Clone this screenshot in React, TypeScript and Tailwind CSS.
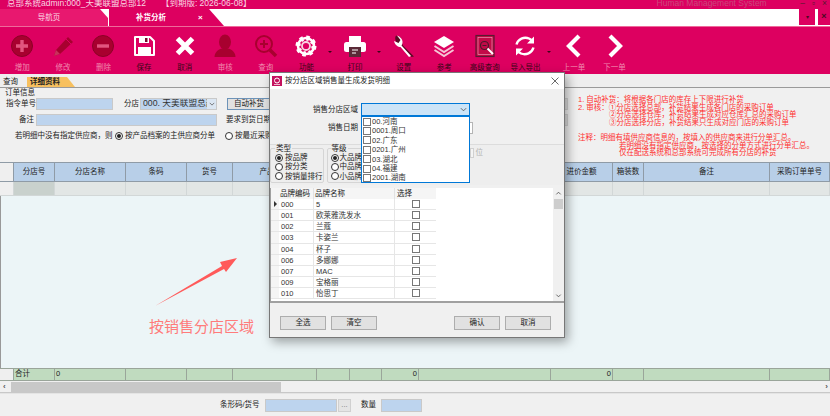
import { ReactNode } from 'react';

const FONT = "font-['Liberation_Sans','Noto_Sans_CJK_SC',sans-serif]";
const DARK = '#a8002f';

const icons: Record<string, ReactNode> = {
  add: (
    <svg viewBox="0 0 24 24" className="h-[24px] w-[24px]">
      <circle cx="12" cy="12" r="10.5" fill={DARK} stroke="#8c0026" />
      <path d="M12 6v12M6 12h12" stroke="#e2557f" strokeWidth="3.4" />
    </svg>
  ),
  edit: (
    <svg viewBox="0 0 24 24" className="h-[24px] w-[24px]">
      <path d="M3 22l2-6L17 3l5 5L9 20z" fill={DARK} />
      <path d="M3 22l2-6 4 4z" fill="#c9305c" />
      <path d="M15 5l5 5" stroke="#dd0060" strokeWidth="1" />
    </svg>
  ),
  remove: (
    <svg viewBox="0 0 24 24" className="h-[24px] w-[24px]">
      <circle cx="12" cy="12" r="10.5" fill={DARK} stroke="#8c0026" />
      <path d="M6 12h12" stroke="#e2557f" strokeWidth="3.4" />
    </svg>
  ),
  save: (
    <svg viewBox="0 0 24 24" className="h-[24px] w-[24px]">
      <path d="M3 3h15l4 4v14H3z" fill="#dd0060" stroke="#fff" strokeWidth="2" strokeLinejoin="round" />
      <path d="M7 3h10v6H7z" fill="#fff" />
      <path d="M13 4h2.500v4H13z" fill="#7a0a30" />
      <path d="M6 13h13v8H6z" fill="#fff" />
    </svg>
  ),
  cancel: (
    <svg viewBox="0 0 24 24" className="h-[24px] w-[24px]">
      <path d="M4.500 4.500l15 15M19.500 4.500l-15 15" stroke="#fff" strokeWidth="5" />
    </svg>
  ),
  audit: (
    <svg viewBox="0 0 24 24" className="h-[24px] w-[24px]">
      <ellipse cx="12" cy="8" rx="6" ry="7.500" fill={DARK} />
      <path d="M1.500 23c0-5 4-7.500 7-8.500h7c3 1 7 3.500 7 8.500z" fill={DARK} />
    </svg>
  ),
  query: (
    <svg viewBox="0 0 24 24" className="h-[24px] w-[24px]">
      <circle cx="10" cy="10" r="8" fill="none" stroke={DARK} strokeWidth="2" />
      <path d="M10 6v8M6 10h8" stroke={DARK} strokeWidth="2" />
      <path d="M16 16l6 6" stroke={DARK} strokeWidth="3.500" />
    </svg>
  ),
  gear: (
    <svg viewBox="0 0 24 24" className="h-[24px] w-[24px]">
      <circle cx="12" cy="12" r="8" fill="none" stroke="#fff" strokeWidth="2.600" />
      <circle cx="12" cy="12" r="8" fill="none" stroke="#fff" strokeWidth="5" strokeDasharray="3.200 3.080" />
      <circle cx="12" cy="12" r="4" fill="none" stroke="#f7d4e0" strokeWidth="1.800" />
    </svg>
  ),
  print: (
    <svg viewBox="0 0 24 24" className="h-[24px] w-[24px]">
      <path d="M6 8V2h12v6z" fill="#fff" />
      <rect x="1" y="8" width="22" height="10" rx="2.500" fill="#fff" />
      <path d="M6 13h12v10H6z" fill="#5a2a38" />
      <path d="M9 16h6M9 19h4" stroke="#fff" strokeWidth="1" />
    </svg>
  ),
  wrench: (
    <svg viewBox="0 0 24 24" className="h-[24px] w-[24px]">
      <path d="M21 22.500L10 11.500C8.500 7.500 7 7 8 3.500L3 1.500C1 5 3 9.500 7 10.500L18.500 23z" fill="#5a0a24" transform="translate(1 0)" />
      <path d="M19 22L9.500 11.500C12 8 10 3 5 1.500L8.500 6 6.500 9 2 7C3 11 6 13 8.500 13L17 23z" fill="#fff" />
    </svg>
  ),
  layers: (
    <svg viewBox="0 0 24 24" className="h-[24px] w-[24px]">
      <path d="M12 2L22 8l-10 6L2 8z" fill="#fff" />
      <path d="M2.500 12L12 18l9.500-6M2.500 16L12 22l9.500-6" fill="none" stroke="#f5c5d5" strokeWidth="2" />
    </svg>
  ),
  advanced: (
    <svg viewBox="0 0 24 24" className="h-[24px] w-[24px]">
      <rect x="3" y="1.500" width="18" height="21" fill="#c20a48" stroke="#5a1a30" strokeWidth="1.200" />
      <rect x="5" y="3.500" width="14" height="17" fill="none" stroke="#f2a9c0" strokeWidth=".6" />
      <circle cx="11.500" cy="11.500" r="4" fill="none" stroke="#4a1a2a" strokeWidth="1.200" />
      <path d="M9.500 11.500h4" stroke="#4a1a2a" strokeWidth="1" />
      <path d="M14.500 14.500l5.500 5.500" stroke="#fff" strokeWidth="2" />
    </svg>
  ),
  refresh: (
    <svg viewBox="0 0 24 24" className="h-[24px] w-[24px]">
      <path d="M3.500 10.500C5 5 11 2.500 16 4.500l2.500 1.500" fill="none" stroke="#fff" strokeWidth="2.400" />
      <path d="M20.500 13.500C19 19 13 21.500 8 19.500L5.500 18" fill="none" stroke="#fff" strokeWidth="2.400" />
      <path d="M21 2.500v7h-7zM3 21.500v-7h7z" fill="#fff" />
    </svg>
  ),
  prev: (
    <svg viewBox="0 0 24 24" className="h-[24px] w-[24px]">
      <path d="M17 2L7 12l10 10" fill="none" stroke="#fff" strokeWidth="4.200" />
    </svg>
  ),
  next: (
    <svg viewBox="0 0 24 24" className="h-[24px] w-[24px]">
      <path d="M7 2l10 10L7 22" fill="none" stroke="#fff" strokeWidth="4.200" />
    </svg>
  ),
};

const tools = [
  { key: 'add', label: '增加', off: true },
  { key: 'edit', label: '修改', off: true },
  { key: 'remove', label: '删除', off: true },
  { key: 'save', label: '保存' },
  { key: 'cancel', label: '取消' },
  { key: 'audit', label: '审核', off: true },
  { key: 'query', label: '查询', off: true },
  { key: 'gear', label: '功能', menu: true },
  { key: 'print', label: '打印', menu: true },
  { key: 'wrench', label: '设置' },
  { key: 'layers', label: '参考' },
  { key: 'advanced', label: '高级查询' },
  { key: 'refresh', label: '导入导出', menu: true },
  { key: 'prev', label: '上一单', off: true },
  { key: 'next', label: '下一单', off: true },
];

const columns = [
  { w: 14, name: '' },
  { w: 41, name: '分店号' },
  { w: 71, name: '分店名称' },
  { w: 61, name: '条码' },
  { w: 46, name: '货号' },
  { w: 84, name: '产品名称' },
  { w: 33, name: '' },
  { w: 32, name: '' },
  { w: 37, name: '' },
  { w: 132, name: '进价' },
  { w: 62, name: '进价金额' },
  { w: 31, name: '箱装数' },
  { w: 126, name: '备注' },
  { w: 60, name: '采购订单单号' },
];

const regions = ['00.河南', '0001.周口', '02.广东', '0201.广州', '03.湖北', '04.福建', '2001.湖南'];

const brands = [
  ['000', '5'],
  ['001', '欧莱雅洗发水'],
  ['002', '兰蔻'],
  ['003', '卡姿兰'],
  ['004', '杯子'],
  ['006', '多娜娜'],
  ['007', 'MAC'],
  ['009', '宝格丽'],
  ['010', '怡思丁'],
];

function Radio({ on }: { on?: boolean }) {
  return (
    <span className="flex h-[8px] w-[8px] shrink-0 items-center justify-center rounded-full border border-[#333] bg-white">
      {on && <span className="h-[4px] w-[4px] rounded-full bg-[#222]" />}
    </span>
  );
}

function Check() {
  return <span className="block h-[8px] w-[8px] shrink-0 border border-[#777] bg-white" />;
}

function DialogButton({ label }: { label: string }) {
  return (
    <button className="h-[14px] w-[46px] border border-[#adadad] bg-[#e1e1e1] text-[7.5px] leading-none text-[#222]">
      {label}
    </button>
  );
}

function ReplenishDialog() {
  return (
    <div className="absolute left-[269px] top-[72px] h-[266px] w-[296px] border border-[#777] bg-[#f0f0f0] shadow-[3px_4px_10px_rgba(0,0,0,0.35)]">
      <div className="flex h-[16px] items-center bg-white pl-[2px] pr-[5px]">
        <svg viewBox="0 0 10 10" className="h-[10px] w-[10px]">
          <rect width="10" height="10" fill="#c4125e" />
          <circle cx="5" cy="4.500" r="2.500" fill="none" stroke="#fff" strokeWidth="1" />
          <path d="M2 8.500h6" stroke="#fff" strokeWidth=".7" />
        </svg>
        <span className="ml-[3px] text-[7.5px] text-[#222]">按分店区域销售量生成发货明细</span>
        <svg viewBox="0 0 8 8" className="ml-auto h-[8px] w-[8px]">
          <path d="M.5.5l7 7M7.500.5l-7 7" stroke="#444" strokeWidth=".8" />
        </svg>
      </div>

      <div className="mt-[14px] flex h-[13px] items-center">
        <span className="w-[88px] text-right text-[7.5px] text-[#222]">销售分店区域</span>
        <div className="ml-[3px] flex h-[13px] w-[109px] items-center justify-end border border-[#0078d7] bg-[#cce4f7] pr-[2px]">
          <svg viewBox="0 0 8 8" className="h-[7px] w-[7px]">
            <path d="M1 2.500l3 3 3-3" fill="none" stroke="#555" strokeWidth="1" />
          </svg>
        </div>
      </div>
      <div className="mt-[6px] flex h-[12px] items-center">
        <span className="w-[88px] text-right text-[7.5px] text-[#222]">销售日期</span>
        <div className="ml-[3px] h-[12px] w-[112px] border border-[#b5b5b5] bg-white" />
      </div>

      <div className="mt-[10px] flex h-[41px] border-t border-[#dcdcdc] bg-[#eeeeee] pt-[1px]">
        <fieldset className="h-[37px] w-[52px] rounded-[2px] border border-[#d5d5d5] pl-[4px] pt-[2px]">
          <legend className="px-[1px] text-[7.5px] leading-[5px] text-[#222]">类型</legend>
          {['按品牌', '按分类', '按销量排行'].map((t, i) => (
            <div key={t} className="flex h-[9.3px] items-center gap-[2px] text-[7.5px] whitespace-nowrap text-[#222]">
              <Radio on={i === 0} />
              {t}
            </div>
          ))}
        </fieldset>
        <fieldset className="ml-[3px] h-[37px] w-[60px] rounded-[2px] border border-[#d5d5d5] pl-[3px] pt-[2px]">
          <legend className="px-[1px] text-[7.5px] leading-[5px] text-[#222]">等级</legend>
          {['大品牌', '中品牌', '小品牌'].map((t, i) => (
            <div key={t} className="flex h-[9.3px] items-center gap-[1px] text-[7.5px] whitespace-nowrap text-[#222]">
              <Radio on={i === 0} />
              {t}
            </div>
          ))}
        </fieldset>
        <div className="ml-[83px] mt-[2px] h-[10px] w-[4px] border border-[#d0d0d0] bg-[#f4f4f4]" />
        <span className="ml-[2px] mt-[2px] text-[7.5px] leading-[10px] text-[#b0b0b0]">位</span>
      </div>

      <div className="mt-[3px] flex h-[115px] w-[294px] border-b-2 border-l border-[#a0a0a0] bg-white">
        <div className="w-[282px]">
          <div className="flex h-[11px] text-[7.5px] leading-[11px] text-[#222]">
            <div className="w-[8px] bg-[#f5f5f5]" />
            <div className="w-[35px] border-r border-[#e2e2e2] bg-[#f5f5f5] pl-[1px]">品牌编码</div>
            <div className="w-[81px] border-r border-[#e2e2e2] bg-[#f5f5f5] pl-[1px]">品牌名称</div>
            <div className="w-[41px] bg-[#f5f5f5] pl-[2px]">选择</div>
          </div>
          {brands.map(([code, name], i) => (
            <div key={code} className="flex h-[11.150px] text-[7.5px] leading-[11px] text-[#333]">
              <div className="flex w-[8px] items-center justify-center border-b border-[#e6e6e6] bg-[#f5f5f5]">
                {i === 0 && <span className="h-0 w-0 border-y-[3px] border-l-[3px] border-y-transparent border-l-[#333]" />}
              </div>
              <div className="w-[35px] border-b border-r border-[#e6e6e6] pl-[2px]">{code}</div>
              <div className="w-[81px] border-b border-r border-[#e6e6e6] pl-[2px]">{name}</div>
              <div className="flex w-[41px] items-center justify-center border-b border-[#e6e6e6]">
                <Check />
              </div>
            </div>
          ))}
        </div>
        <div className="ml-auto flex w-[11px] flex-col items-center bg-[#f0f0f0]">
          <svg viewBox="0 0 8 8" className="mt-[2px] h-[7px] w-[7px]">
            <path d="M1.500 5l2.500-2.500L6.500 5" fill="none" stroke="#555" strokeWidth="1" />
          </svg>
          <div className="mt-[2px] h-[10px] w-[9px] bg-[#cdcdcd]" />
          <svg viewBox="0 0 8 8" className="mt-auto mb-[2px] h-[7px] w-[7px]">
            <path d="M1.500 3l2.500 2.500L6.500 3" fill="none" stroke="#555" strokeWidth="1" />
          </svg>
        </div>
      </div>

      <div className="mt-[13px] flex pl-[10px] pr-[13px]">
        <DialogButton label="全选" />
        <div className="ml-[5px]">
          <DialogButton label="清空" />
        </div>
        <div className="ml-auto">
          <DialogButton label="确认" />
        </div>
        <div className="ml-[5px]">
          <DialogButton label="取消" />
        </div>
      </div>

      {/* opened list of the region combo */}
      <div className="absolute left-[91px] top-[43px] h-[67px] w-[109px] border border-[#0078d7] bg-white">
        {regions.map((r) => (
          <div key={r} className="flex h-[9.400px] items-center gap-[1px] pl-[1px] text-[7.5px] whitespace-nowrap text-[#333]">
            <Check />
            {r}
          </div>
        ))}
      </div>
    </div>
  );
}

export default function App() {
  return (
    <div className={`${FONT} relative flex h-[416px] w-[830px] flex-col overflow-hidden bg-[#f0f0f0] text-[7.5px] text-[#222]`}>
      <div className="flex h-[9px] overflow-hidden bg-[#dd0060] text-[8.5px] leading-[6px] text-[#f9d5e2]">
        <span className="ml-[7px]">总部系统admin:000_天美联盟总部12</span>
        <span className="ml-[15px]">【到期版: 2026-06-08】</span>
        <span className="ml-[405px] text-[#c9497c]">Human Management System</span>
        <span className="ml-auto mr-[3px] flex gap-[7px] text-[#5a1a30]">
          <span>–</span>
          <span>▫</span>
          <span>×</span>
        </span>
      </div>

      <div className="flex h-[18px] border-b border-[#ee6a9a] bg-white">
        <div className="flex w-[108px] items-center justify-center bg-[#e8186f] pr-[10px] text-[7.5px] text-[#fbd9e6] [clip-path:polygon(0_0,100px_0,100%_9px,100%_100%,0_100%)]">
          导航页
        </div>
        <div className="ml-[1px] flex w-[115px] items-center bg-[#dd0060] pl-[27px] text-[7.5px] font-bold text-[#fff] [clip-path:polygon(0_0,100px_0,100%_100%,0_100%)]">
          补货分析
          <span className="ml-[32px] text-[8px]">×</span>
        </div>
        <div className="ml-auto flex h-[16px] w-[16px] items-center justify-center bg-[#dd0060] text-[6px] text-[#4a0a20]">▾</div>
        <div className="ml-[3px] flex h-[16px] w-[12px] items-center justify-center bg-[#dd0060] text-[9px] font-bold text-[#4a0a20]">×</div>
      </div>

      <div className="flex h-[47px] bg-[#dd0060] pl-[2px]">
        {tools.map((t) => (
          <div key={t.key} className={`relative flex w-[40.600px] flex-col items-center pt-[7px] ${t.menu ? 'mr-[8px]' : ''}`}>
            {icons[t.key]}
            <span className={`mt-[4px] text-[7.5px] whitespace-nowrap ${t.off ? 'text-[#f08aae]' : 'text-[#3a0716]'}`}>{t.label}</span>
            {t.menu && <span className="absolute left-[42px] top-[24px] h-0 w-0 border-x-[2px] border-t-[2px] border-x-transparent border-t-[#3a0716]" />}
          </div>
        ))}
      </div>

      <div className="flex h-[14px] items-end border-b border-[#9a9a9a] bg-[#eeeeee] pl-[3px]">
        <span className="h-[10px] w-[20px] text-[7.5px] leading-[10px]">查询</span>
        <span className="ml-[4px] h-[10px] w-[48px] bg-[#f7c05f] pl-[3px] text-[7.5px] font-bold leading-[10px] text-[#222] [clip-path:polygon(0_0,40px_0,100%_100%,0_100%)]">
          详细资料
        </span>
      </div>

      <div className="flex h-[74px]">
        <div className="w-[568px] pt-[1px]">
          <div className="h-[9px] pl-[5px] text-[7.5px] leading-[8px]">订单信息</div>
          <div className="flex h-[12px] items-center">
            <span className="w-[35px] pl-[6px] whitespace-nowrap">指令单号</span>
            <div className="ml-[1px] h-[12px] w-[77px] border border-[#c9c9c9] bg-[#bdd4ee]" />
            <span className="ml-[11px] w-[16px]">分店</span>
            <div className="flex h-[12px] w-[77px] items-center overflow-hidden border border-[#c9c9c9] bg-[#bdd4ee] pl-[2px] text-[8.7px] whitespace-nowrap text-[#333]">
              <span className="w-[64px] overflow-hidden">000. 天美联盟总部</span>
              <span className="flex h-full flex-1 items-center justify-center bg-[#dbe6f2]">
                <svg viewBox="0 0 8 8" className="h-[6px] w-[6px]">
                  <path d="M1 2.500l3 3 3-3" fill="none" stroke="#555" strokeWidth="1" />
                </svg>
              </span>
            </div>
            <div className="ml-[10px] flex h-[12px] w-[58px] items-center border border-[#6d93b8] bg-[#e1e1e1] pl-[6px]">自动补货</div>
            <div className="ml-auto h-[12px] w-[30px] border border-[#d0d0d0] bg-[#dedede]" />
          </div>
          <div className="mt-[4px] flex h-[12px] items-center">
            <span className="w-[35px] pl-[19px] whitespace-nowrap">备注</span>
            <div className="ml-[1px] h-[12px] w-[181px] border border-[#c9c9c9] bg-[#bdd4ee]" />
            <span className="ml-[9px] whitespace-nowrap">要求到货日期</span>
            <div className="ml-auto h-[12px] w-[30px] border border-[#d0d0d0] bg-[#dedede]" />
          </div>
          <div className="mt-[4px] flex h-[12px] items-center">
            <span className="ml-[15px] w-[100px] whitespace-nowrap">若明细中没有指定供应商，则</span>
            <Radio on />
            <span className="ml-[2px] w-[100px] whitespace-nowrap">按产品档案的主供应商分单</span>
            <Radio />
            <span className="ml-[2px] whitespace-nowrap">按最近采购的供应商分单</span>
          </div>
        </div>
        <div className="pl-[10px] pt-[8px] text-[7.5px] leading-[7.600px] whitespace-nowrap text-[#ff2f2f]">
          <div>1. 自动补货：将根据各门店的库存上下限进行补货</div>
          <div>2. 审核：①分店选择总部，补货结果生成各门店的采购订单</div>
          <div className="pl-[31px]">②分店选择仓库，补货结果生成对应仓库汇总的采购订单</div>
          <div className="pl-[31px]">③分店选择分店，补货结果只生成对应门店的采购订单</div>
          <div className="mt-[7.600px]">注释：明细有填供应商信息的，按填入的供应商来进行分单汇总。</div>
          <div className="pl-[41px]">若明细没有指定供应商，按选择的分单方式进行分单汇总。</div>
          <div className="pl-[41px]">仅在配送系统和总部系统可完成所有分店的补货</div>
        </div>
      </div>

      <div className="flex h-[20px] border-y border-[#8f9ba6]">
        {columns.map((c, i) => (
          <div
            key={i}
            style={{ width: c.w }}
            className={`flex items-center justify-center overflow-hidden whitespace-nowrap border-r border-[#8f9ba6] ${i === 0 ? 'bg-[#efefef]' : 'bg-[#b8cfe8]'}`}
          >
            {c.name}
          </div>
        ))}
      </div>
      <div className="flex h-[14px]">
        {columns.map((c, i) => (
          <div
            key={i}
            style={{ width: c.w }}
            className={`border-b border-r border-[#d2d7d7] ${i === 0 ? 'bg-[#efefef]' : i === 1 ? 'bg-[#c9d1cd]' : 'bg-[#e2e6e5]'}`}
          />
        ))}
      </div>

      <div className="relative flex-1 border-l border-[#999] bg-[#ecf5f7]">
        <svg viewBox="0 0 90 54" className="absolute left-[150px] top-[57px] h-[54px] w-[90px]">
          <path d="M4 53L71 13 69 9 86 5 75 19 73 16z" fill="#ff5a5a" />
        </svg>
        <span className="absolute left-[148px] top-[121px] text-[15px] leading-[20px] text-[#ff7b7b]">按销售分店区域</span>
      </div>

      <div className="flex h-[13px] border-y border-[#9aa59a]">
        {columns.map((c, i) => (
          <div
            key={i}
            style={{ width: c.w }}
            className={`border-r border-[#9aa59a] px-[1px] leading-[9px] ${i === 0 ? 'bg-[#efefef]' : 'bg-[#c0dbbf]'} ${i === 8 || i === 10 ? 'text-right' : ''}`}
          >
            {i === 1 && '合计'}
            {i === 2 && '0'}
            {(i === 8 || i === 10) && '0'}
          </div>
        ))}
      </div>

      <div className="flex h-[12px] items-center border-b border-[#c8c8c8] bg-[#f0f0f0]">
        <span className="w-[11px] pl-[3px] text-[8px] font-bold leading-none text-[#555]">‹</span>
        <div className="h-[10px] w-[270px] bg-[#c8c8c8]" />
        <span className="ml-auto pr-[2px] text-[8px] font-bold leading-none text-[#555]">›</span>
      </div>

      <div className="flex h-[23px] items-center border-t border-[#e4e4e4] pl-[220px]">
        <span className="w-[41px] whitespace-nowrap">条形码/货号</span>
        <div className="ml-[4px] h-[13px] w-[72px] border border-[#c9c9c9] bg-[#bdd4ee]" />
        <div className="ml-[1px] flex h-[13px] w-[13px] items-center justify-center border border-[#d0d0d0] bg-[#e4e4e4] text-[#777]">...</div>
        <span className="ml-[10px]">数量</span>
        <div className="ml-[5px] h-[13px] w-[41px] border border-[#c9c9c9] bg-[#bdd4ee]" />
      </div>

      <ReplenishDialog />
    </div>
  );
}
